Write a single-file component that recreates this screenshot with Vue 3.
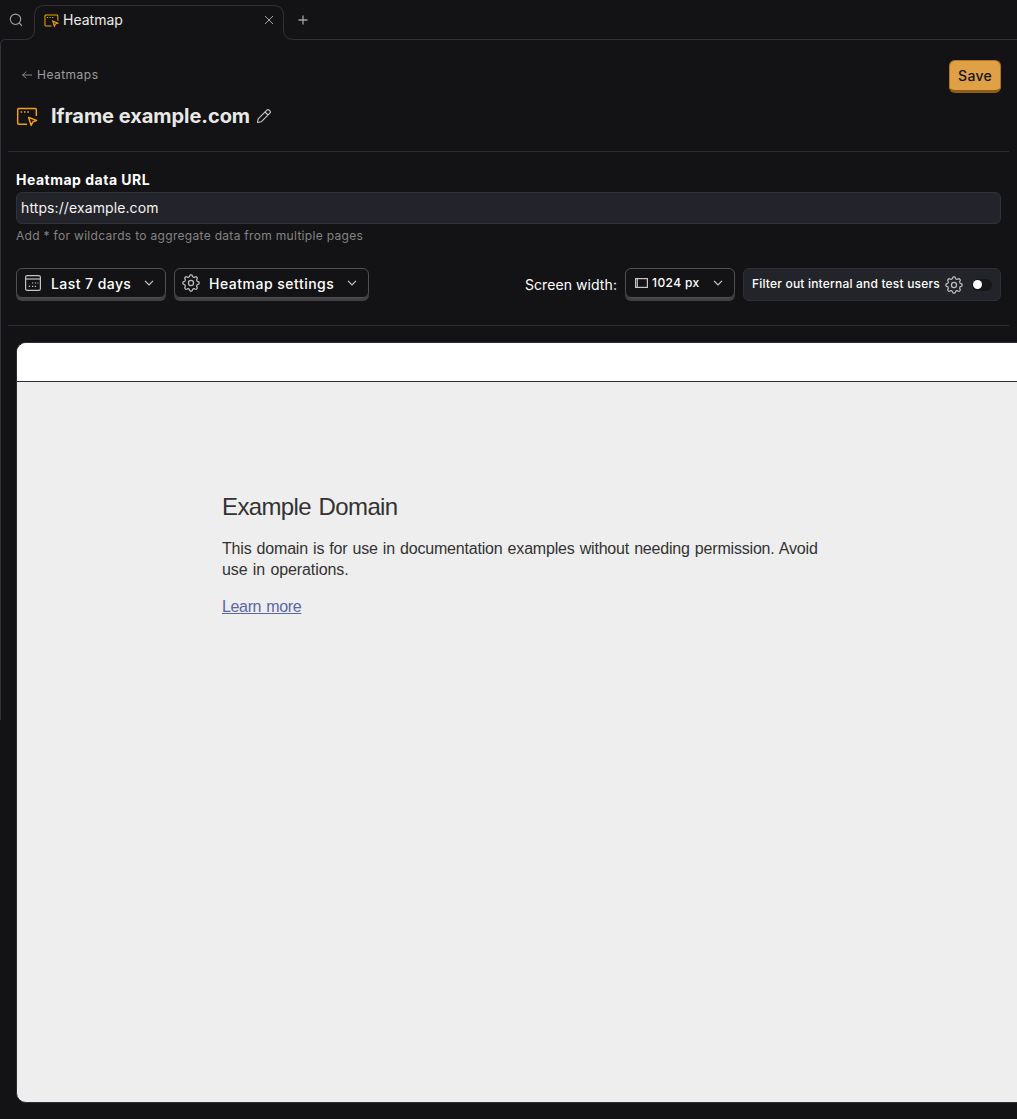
<script setup>
import { ref } from 'vue'

const dataUrl = ref('https://example.com')
const gearPath = (() => {
  const pts = []
  for (let i = 0; i <= 96; i++) {
    const a = (i / 96) * Math.PI * 2
    const c = Math.cos(a * 8)
    const r = 9.6 + 1.25 * Math.tanh(c * 2)
    pts.push(`${(12 + r * Math.sin(a)).toFixed(2)} ${(12 - r * Math.cos(a)).toFixed(2)}`)
  }
  return 'M' + pts.join('L') + 'Z'
})()
</script>

<template>
  <div class="app">
    <header class="tabs">
      <svg class="outline" width="1017" height="48" fill="none" stroke="#32323c">
        <path d="M.5 48V44.5Q.5 39.5 5.5 39.5H24.5Q34.5 39.5 34.5 29.5V15.5Q34.5 5.5 44.5 5.5H273.5Q283.5 5.5 283.5 15.5V29.5Q283.5 39.5 293.5 39.5H1017" />
      </svg>
      <button class="search" aria-label="Search">
        <svg width="14" height="14" viewBox="0 0 14 14" fill="none" stroke="#a3a3a3" stroke-width="1.1"><circle cx="6.5" cy="6.3" r="5.2" /><path d="M10.2 10l2.8 2.8" /></svg>
      </button>
      <div class="tab">
        <svg class="tabicon" width="15" height="14" viewBox="0 0 22 20" fill="none" stroke="#f1a104" stroke-width="1.5"><path d="M11 17.2H2.7Q1.4 17.2 1.4 15.9V2.5Q1.4 1.2 2.7 1.2H19Q20.3 1.2 20.3 2.5V9.5" /><path d="M4.2 4.8h1.8M8 4.8h1.8M11.8 4.8h1.8" /><path d="M12.6 10L20.5 13.2 16.8 14.5 15.2 18Z" fill="#f1a104" fill-opacity=".4" /></svg>
        <span>Heatmap</span>
        <svg class="close" width="10" height="10" fill="none" stroke="#a3a3a3"><path d="M1 1l8 8M9 1l-8 8" /></svg>
      </div>
      <svg class="plus" width="10" height="10" fill="none" stroke="#a3a3a3" stroke-width="1.3"><path d="M.5 5h9M5 .5v9" /></svg>
    </header>

    <main class="scene">
      <div class="top">
        <a class="back"><svg width="10" height="10" fill="none" stroke="#858585"><path d="M0 5h10M4.2 1.6L.8 5 4.2 8.4" /></svg><span>Heatmaps</span></a>
        <button class="save">Save</button>
      </div>
      <div class="title">
        <svg class="titleicon" width="22" height="20" viewBox="0 0 22 20" fill="none" stroke="#f1a104" stroke-width="1.5"><path d="M11 17.2H2.8Q1.7 17.2 1.7 16.1V2.7Q1.7 1.6 2.8 1.6H19.2Q20.3 1.6 20.3 2.7V9" /><path d="M4.6 5h1.6M8 5h1.6M11.4 5h1.6" /><path stroke-width="1.5" stroke-linejoin="round" d="M12.6 10.4L20.6 13.5 16.9 14.9 15.1 18.4Z" /></svg>
        <h1>Iframe example.com</h1>
        <svg class="pencil" width="16" height="16" viewBox="0 0 16 16" fill="none" stroke="#c9c9c9" stroke-width="1.1" stroke-linejoin="round"><path d="M1.5 14.5L2.2 10.8 10.9 2.1Q12 1 13.1 2.1L13.9 2.9Q15 4 13.9 5.1L5.2 13.8Z M9 4L12 7" /></svg>
      </div>
      <hr>
      <label class="label" for="url">Heatmap data URL</label>
      <input id="url" v-model="dataUrl" class="url">
      <p class="hint">Add * for wildcards to aggregate data from multiple pages</p>

      <div class="controls">
        <button class="btn date">
          <svg width="18" height="18" viewBox="0 0 18 18" fill="none" stroke="#c2c2c2" stroke-width="1.2"><rect x="1.6" y="1.6" width="14.8" height="14.8" rx="1.6" /><path d="M1.6 5h14.8" /><path d="M8 9h1.3M10.8 9h1.3M13.3 9h1M4.8 12.3h1.3M8 12.3h1.3M10.8 12.3h1.3" /></svg>
          <span>Last 7 days</span>
          <svg class="chev" width="10" height="6" fill="none" stroke="#c8c8c8" stroke-width="1.2"><path d="M1 .8L5 4.8 9 .8" /></svg>
        </button>
        <button class="btn settings">
          <svg width="18" height="18" viewBox="0 0 24 24" fill="none" stroke="#bcbcbc" stroke-width="1.7"><path :d="gearPath" /><circle cx="12" cy="12" r="3.4" /></svg>
          <span>Heatmap settings</span>
          <svg class="chev" width="10" height="6" fill="none" stroke="#c8c8c8" stroke-width="1.2"><path d="M1 .8L5 4.8 9 .8" /></svg>
        </button>
        <span class="swlabel">Screen width:</span>
        <button class="btn width">
          <svg width="13" height="10" fill="none" stroke="#c6c6c6" stroke-width="1.2"><rect x=".6" y=".6" width="11.8" height="8.8" /><path d="M2.3 1v8" /></svg>
          <span>1024 px</span>
          <svg class="chev" width="10" height="6" fill="none" stroke="#c8c8c8" stroke-width="1.2"><path d="M1 .8L5 4.8 9 .8" /></svg>
        </button>
        <div class="filter">
          <span>Filter out internal and test users</span>
          <svg width="18" height="18" viewBox="0 0 24 24" fill="none" stroke="#bcbcbc" stroke-width="1.7"><path :d="gearPath" /><circle cx="12" cy="12" r="3.4" /></svg>
          <i class="switch"><b></b></i>
        </div>
      </div>
      <hr class="second">

      <section class="frame">
        <div class="bar"></div>
        <article class="page">
          <h2>Example Domain</h2>
          <p><span class="l1">This domain is for use in documentation examples without needing permission. Avoid</span><br><span class="l2">use in operations.</span></p>
          <p class="more"><a>Learn more</a></p>
        </article>
      </section>
    </main>
  </div>
</template>

<style>
body { margin: 0; background: #131315; }
</style>

<style scoped>
* { box-sizing: border-box; }
.app { position: relative; width: 1017px; height: 1119px; overflow: hidden; background: #131315; color: #fff; font: 14px/20px Inter, sans-serif; }
button { font: inherit; color: inherit; background: none; border: 0; padding: 0; }
svg { flex: none; display: block; }
.tabs { height: 40px; display: flex; align-items: center; }
.outline { position: absolute; left: 0; top: 0; }
.search { width: 34px; padding-left: 9px; }
.tab { width: 250px; height: 40px; display: flex; align-items: center; padding: 0 10px; color: #eaeaea; }
.tab span { margin-left: 4px; }
.tabicon { margin-top: 2px; }
.close { margin-left: auto; }
.plus { margin-left: 14px; }
.scene { position: relative; height: 1079px; padding: 20px 16px 0; }
.scene::before { content: ''; position: absolute; left: 0; top: 8px; width: 1px; height: 672px; background: #32323c; }
.top { display: flex; justify-content: space-between; height: 33px; }
.back { display: flex; align-items: center; gap: 5px; height: 30px; padding-left: 6px; color: #9c9c9c; font-size: 12px; letter-spacing: .48px; }
.save { width: 52px; height: 33px; border: 1px solid #b1741b; border-bottom: 3px solid #8f5e16; border-radius: 6px; background: #e0a045; color: #131315; font-weight: 500; line-height: 29px; letter-spacing: .25px; }
.title { display: flex; align-items: center; height: 28px; margin-top: 9px; }
.titleicon { margin-top: 2px; }
h1 { margin: 0 0 0 13px; font-size: 20px; line-height: 28px; font-weight: 700; color: #e8e8e6; letter-spacing: -.04px; }
.pencil { margin-left: 6px; }
hr { margin: 21px -8px 0; border: 0; height: 1px; background: #2d2d35; }
.label { display: block; margin-top: 18px; font-weight: 700; letter-spacing: .5px; }
.url { display: block; width: 100%; height: 32px; margin-top: 2px; border: 1px solid #30313a; border-radius: 6px; background: #232429; color: #f3f3f3; font: 14px/20px Inter, sans-serif; letter-spacing: .1px; padding: 0 4px 2px; outline: 0; }
.hint { margin: 3px 0 0; font-size: 12px; line-height: 18px; color: #838383; letter-spacing: .31px; }
.controls { display: flex; height: 33px; margin-top: 23px; }
.btn { display: flex; align-items: center; height: 30px; border: 1px solid #505053; box-shadow: 0 3px 0 #424244; border-radius: 6px; font-weight: 500; text-align: left; padding: 0 11px 0 7px; letter-spacing: .43px; }
.btn span { margin-left: 9px; padding-top: 1px; }
.btn .chev { margin-left: auto; }
.date { width: 150px; }
.settings { width: 195px; margin-left: 8px; letter-spacing: .5px; }
.swlabel { margin-left: auto; padding-top: 7px; letter-spacing: .08px; }
.btn.width { width: 110px; margin-left: 8px; padding-left: 9px; font-size: 12px; letter-spacing: .4px; }
.btn.width span { margin-left: 4px; padding: 0; }
.filter { display: flex; align-items: center; width: 258px; height: 33px; margin-left: 8px; border: 1px solid #2e2f38; border-radius: 6px; background: #232429; padding-left: 8px; font-size: 12px; font-weight: 500; letter-spacing: .19px; }
.filter span { width: 188px; white-space: nowrap; padding-bottom: 2px; }
.filter svg { margin-left: 5px; }
.switch { width: 20px; height: 12px; margin-left: 9px; border-radius: 6px; background: #17171a; display: flex; align-items: center; }
.switch b { width: 9px; height: 9px; margin-left: 1px; border-radius: 50%; background: #fff; }
.second { margin-top: 24px; }
.frame { width: 1026px; height: 761px; margin-top: 16px; border: 1px solid #2d2d35; border-radius: 10px; overflow: hidden; background: #eee; }
.bar { height: 39px; background: #fff; border-bottom: 1px solid #2d2d35; }
.page { padding: 109px 0 0 205px; color: #333; font: 16px/21px "Liberation Sans", Arial, sans-serif; white-space: nowrap; }
h2 { margin: 0; font-size: 24px; line-height: 32px; font-weight: 400; letter-spacing: -.62px; word-spacing: 1.5px; }
p { margin: 16px 0 0; }
.page p { margin: 15px 0 0; }
.l1 { letter-spacing: -.19px; word-spacing: .85px; }
.l2 { letter-spacing: -.1px; word-spacing: 1px; }
.page .more { margin-top: 16px; }
.more a { color: #5b66a5; text-decoration: underline; letter-spacing: -.35px; word-spacing: 1px; }
</style>
